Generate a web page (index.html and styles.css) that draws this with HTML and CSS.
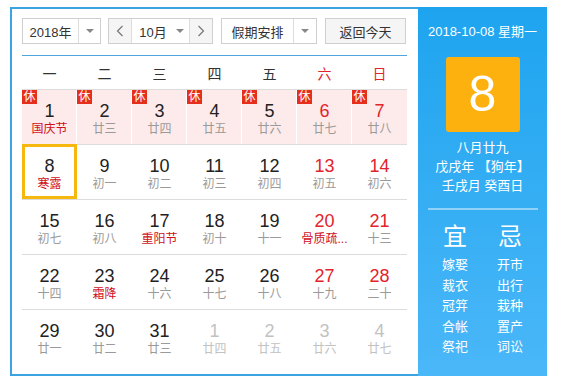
FILE: index.html
```html
<!DOCTYPE html>
<html lang="zh">
<head>
<meta charset="utf-8">
<title>万年历</title>
<link rel="stylesheet" href="styles.css">
</head>
<body>
<div class="cal">
  <div class="main">
    <div class="toolbar">
      <div class="select year"><span class="val">2018年</span><span class="drop"><i class="tri"></i></span></div>
      <div class="select month">
        <span class="nav"><svg width="8" height="12" viewBox="0 0 8 12"><polyline points="6.5,1 1.5,6 6.5,11" fill="none" stroke="#777" stroke-width="1.2"/></svg></span>
        <span class="val">10月<i class="tri in"></i></span>
        <span class="nav"><svg width="8" height="12" viewBox="0 0 8 12"><polyline points="1.5,1 6.5,6 1.5,11" fill="none" stroke="#777" stroke-width="1.2"/></svg></span>
      </div>
      <div class="select holiday"><span class="val">假期安排</span><span class="drop"><i class="tri"></i></span></div>
      <div class="btn">返回今天</div>
    </div>
    <div class="weekdays">
      <span>一</span><span>二</span><span>三</span><span>四</span><span>五</span><span class="we">六</span><span class="we">日</span>
    </div>
    <div class="grid">
      <div class="cell rest"><b class="xiu">休</b><span class="n">1</span><span class="l fest">国庆节</span></div>
      <div class="cell rest"><b class="xiu">休</b><span class="n">2</span><span class="l">廿三</span></div>
      <div class="cell rest"><b class="xiu">休</b><span class="n">3</span><span class="l">廿四</span></div>
      <div class="cell rest"><b class="xiu">休</b><span class="n">4</span><span class="l">廿五</span></div>
      <div class="cell rest"><b class="xiu">休</b><span class="n">5</span><span class="l">廿六</span></div>
      <div class="cell rest we"><b class="xiu">休</b><span class="n">6</span><span class="l">廿七</span></div>
      <div class="cell rest we last"><b class="xiu">休</b><span class="n">7</span><span class="l">廿八</span></div>

      <div class="cell today"><span class="n">8</span><span class="l fest">寒露</span></div>
      <div class="cell"><span class="n">9</span><span class="l">初一</span></div>
      <div class="cell"><span class="n">10</span><span class="l">初二</span></div>
      <div class="cell"><span class="n">11</span><span class="l">初三</span></div>
      <div class="cell"><span class="n">12</span><span class="l">初四</span></div>
      <div class="cell we"><span class="n">13</span><span class="l">初五</span></div>
      <div class="cell we"><span class="n">14</span><span class="l">初六</span></div>

      <div class="cell"><span class="n">15</span><span class="l">初七</span></div>
      <div class="cell"><span class="n">16</span><span class="l">初八</span></div>
      <div class="cell"><span class="n">17</span><span class="l fest">重阳节</span></div>
      <div class="cell"><span class="n">18</span><span class="l">初十</span></div>
      <div class="cell"><span class="n">19</span><span class="l">十一</span></div>
      <div class="cell we"><span class="n">20</span><span class="l fest">骨质疏...</span></div>
      <div class="cell we"><span class="n">21</span><span class="l">十三</span></div>

      <div class="cell"><span class="n">22</span><span class="l">十四</span></div>
      <div class="cell"><span class="n">23</span><span class="l fest">霜降</span></div>
      <div class="cell"><span class="n">24</span><span class="l">十六</span></div>
      <div class="cell"><span class="n">25</span><span class="l">十七</span></div>
      <div class="cell"><span class="n">26</span><span class="l">十八</span></div>
      <div class="cell we"><span class="n">27</span><span class="l">十九</span></div>
      <div class="cell we"><span class="n">28</span><span class="l">二十</span></div>

      <div class="cell"><span class="n">29</span><span class="l">廿一</span></div>
      <div class="cell"><span class="n">30</span><span class="l">廿二</span></div>
      <div class="cell"><span class="n">31</span><span class="l">廿三</span></div>
      <div class="cell other"><span class="n">1</span><span class="l">廿四</span></div>
      <div class="cell other"><span class="n">2</span><span class="l">廿五</span></div>
      <div class="cell other"><span class="n">3</span><span class="l">廿六</span></div>
      <div class="cell other"><span class="n">4</span><span class="l">廿七</span></div>
    </div>
  </div>
  <div class="side">
    <div class="date">2018-10-08 星期一</div>
    <div class="big">8</div>
    <div class="lunar">
      <div>八月廿九</div>
      <div>戊戌年 【狗年】</div>
      <div>壬戌月 癸酉日</div>
    </div>
    <div class="sep"></div>
    <div class="yiji">
      <div class="col">
        <div class="head">宜</div>
        <div>嫁娶</div><div>裁衣</div><div>冠笄</div><div>合帐</div><div>祭祀</div>
      </div>
      <div class="col">
        <div class="head">忌</div>
        <div>开市</div><div>出行</div><div>栽种</div><div>置产</div><div>词讼</div>
      </div>
    </div>
  </div>
</div>
</body>
</html>
```
FILE: styles.css
```css
* { box-sizing: border-box; }
body {
  margin: 0;
  background: #fff;
  font-family: "Liberation Sans", "Noto Sans CJK SC", sans-serif;
  color: #333;
}
.cal {
  display: flex;
  margin: 7px 0 0 10px;
  width: 537px;
  height: 369px;
}
.main {
  width: 408px;
  border: 2px solid #3ca3e2;
  border-right: none;
  padding: 9px 11px 10px 10px;
}
.toolbar {
  display: flex;
  height: 38px;
  padding-bottom: 11px;
  border-bottom: 1px solid #4ea6dc;
  font-size: 13px;
}
.select, .btn {
  display: flex;
  height: 26px;
  border: 1px solid #cfcfcf;
  background: #fff;
}
.val {
  display: flex;
  align-items: center;
  justify-content: center;
  color: #333;
}
.year { width: 79px; margin-right: 7px; }
.year .val { width: 55px; }
.drop {
  flex: 1;
  border-left: 1px solid #dcdcdc;
  display: flex;
  align-items: center;
  justify-content: center;
}
.tri {
  display: block;
  width: 0;
  height: 0;
  border-left: 4px solid transparent;
  border-right: 4px solid transparent;
  border-top: 4px solid #888;
}
.tri.in { margin-left: 9px; }
.month { width: 105px; margin-right: 8px; }
.month .nav {
  width: 23px;
  background: #f5f5f5;
  display: flex;
  align-items: center;
  justify-content: center;
}
.month .nav:first-child { border-right: 1px solid #dcdcdc; }
.month .nav:last-child { border-left: 1px solid #dcdcdc; }
.month .val { flex: 1; padding-left: 2px; }
.holiday { width: 96px; margin-right: 8px; }
.holiday .val { width: 71px; }
.btn {
  width: 81px;
  background: #f5f5f5;
  align-items: center;
  justify-content: center;
  color: #333;
}
.weekdays {
  display: grid;
  grid-template-columns: repeat(7, 55px);
  height: 33px;
  align-items: center;
  font-size: 14px;
  text-align: center;
  color: #333;
}
.weekdays .we { color: #e3232c; }
.grid {
  display: grid;
  grid-template-columns: repeat(7, 55px);
  grid-auto-rows: 55px;
}
.cell {
  position: relative;
  border-top: 1px solid #dcdcdc;
  display: flex;
  flex-direction: column;
  align-items: center;
  padding-top: 11px;
}
.cell.rest {
  background: #fdeaea;
  box-shadow: inset -1px 0 0 #fff;
}
.cell.rest.last { box-shadow: none; }
.n {
  font-size: 18px;
  line-height: 20px;
  color: #222;
}
.l {
  font-size: 12px;
  line-height: 16px;
  color: #9a9a9a;
  white-space: nowrap;
}
.cell.we .n { color: #e3232c; }
.l.fest { color: #d0101b; }
.cell.other .n, .cell.other .l { color: #c2c2c2; }
.xiu {
  position: absolute;
  left: 0;
  top: 0;
  width: 15px;
  height: 14px;
  background: #e52f1c;
  color: #fff;
  font-weight: normal;
  font-size: 12px;
  line-height: 14px;
  text-align: center;
}
.cell.today::after {
  content: "";
  position: absolute;
  left: 0;
  right: 0;
  top: -1px;
  bottom: 0;
  border: 3px solid #f6b80f;
}
.side {
  width: 129px;
  background: linear-gradient(#1ea4ef, #4ab7f8);
  color: #fff;
  display: flex;
  flex-direction: column;
  align-items: center;
  padding-top: 17px;
}
.date {
  font-size: 13px;
  line-height: 16px;
  height: 16px;
}
.big {
  margin-top: 17px;
  width: 74px;
  height: 75px;
  background: #fdb10f;
  border-radius: 3px;
  font-size: 50px;
  line-height: 75px;
  text-align: center;
  color: #fff;
}
.lunar {
  margin-top: 6px;
  font-size: 13px;
  line-height: 19px;
  text-align: center;
}
.sep {
  margin-top: 13px;
  width: 110px;
  height: 2px;
  background: rgba(255,255,255,0.45);
}
.yiji {
  display: flex;
  margin-top: 12px;
}
.col {
  width: 55px;
  text-align: center;
  font-size: 13px;
  line-height: 20.5px;
}
.col .head {
  font-size: 24px;
  line-height: 30px;
  margin-bottom: 3px;
}
```
